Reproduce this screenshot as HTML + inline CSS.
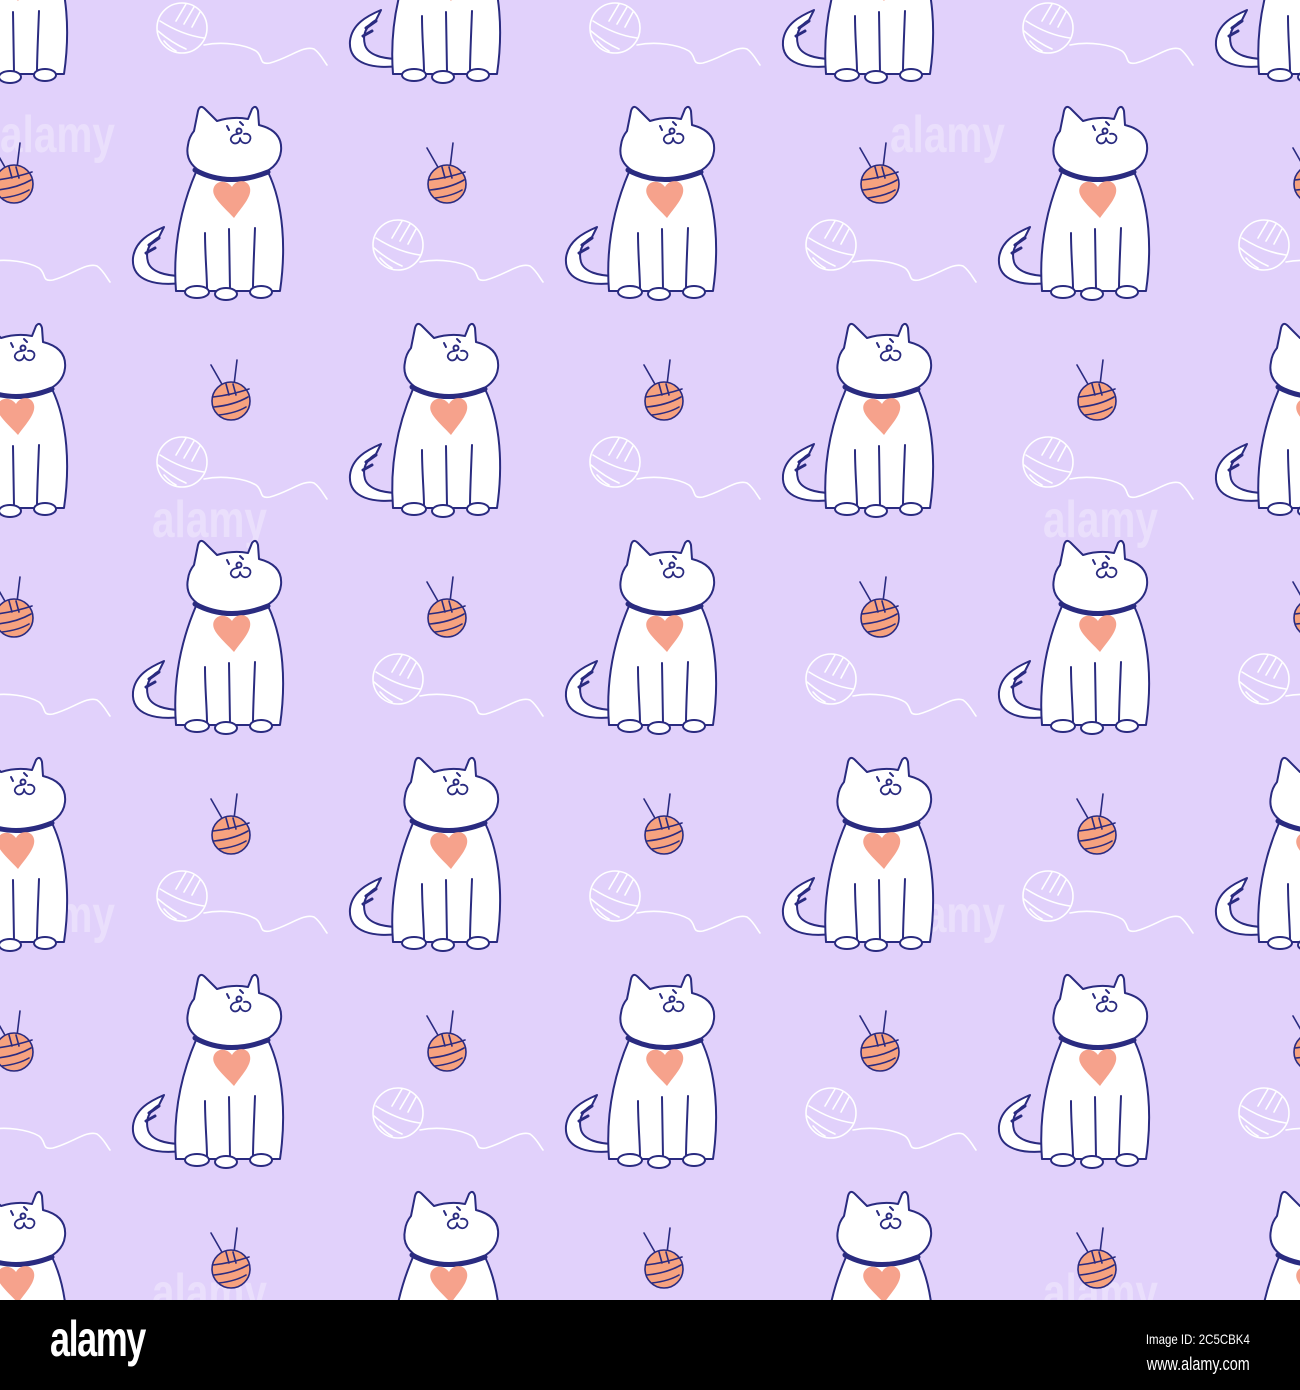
<!DOCTYPE html>
<html><head><meta charset="utf-8"><style>
html,body{margin:0;padding:0;background:#000;}
body{width:1300px;height:1390px;overflow:hidden;position:relative;font-family:"Liberation Sans",sans-serif;}
svg{display:block;position:absolute;left:0;top:0;}
.foot{position:absolute;left:0;top:1300px;width:1300px;height:90px;background:#000;color:#fff;}
.logo{position:absolute;left:50px;top:14px;font-size:50px;font-weight:bold;letter-spacing:-2px;transform:scaleX(0.72);transform-origin:left top;line-height:1;}
.id{position:absolute;right:50px;top:32px;font-size:14px;transform:scaleX(0.82);transform-origin:right top;line-height:1;}
.www{position:absolute;right:50px;top:55px;font-size:18px;transform:scaleX(0.8);transform-origin:right top;line-height:1;}
</style></head><body>
<svg width="1300" height="1300" viewBox="0 0 1300 1300">
<defs>
<g id="t">
 <g stroke="#2a2b80" stroke-width="2" stroke-linejoin="round" stroke-linecap="round">
  <!-- tail -->
  <path d="M182,283 C158,286 131,282 133,258 C135,241 150,233 164,227 L159,237 C149,243 145,251 148,262 C151,272 166,276 182,276 Z" fill="#fff"/>
  <path d="M149,245 L159,238 M146,253 L155,248" stroke-width="3"/>
  <!-- body -->
  <path d="M196,172 C184,200 172,240 176,291 L280,291 C286,250 284,205 268,172 Z" fill="#fff"/>
  <path d="M205,233 C205,255 207,275 207,289 M229,229 L230,289 M255,228 C254,255 253,275 253,289" fill="none"/>
  <ellipse cx="197" cy="292" rx="12" ry="6" fill="#fff"/>
  <ellipse cx="226" cy="294" rx="11" ry="6" fill="#fff"/>
  <ellipse cx="261" cy="292" rx="11" ry="6" fill="#fff"/>
  <!-- head -->
  <path d="M194,131 L198,111 Q200,104 205,109 L217,121 Q233,116 248,119 L252,109 Q256,104 258,111 L259,125 Q283,131 281,151 Q279,170 252,177 Q226,181 205,174 Q184,164 188,145 Q189,137 194,131 Z" fill="#fff"/>
  <path d="M227,126 L229,130 M240,122 L243,125" fill="none"/>
  <circle cx="239" cy="131" r="2.5" fill="#fff"/>
  <path d="M238,134 C232,134 229,139 232,142 C235,145 240,143 240,138 C241,144 248,145 250,140 C252,135 247,133 244,134" fill="none" stroke-width="1.8"/>
  <!-- collar -->
  <path d="M195,170 Q228,188 268,172" fill="none" stroke-width="5"/>
 </g>
 <path d="M234,218 C222,205 210,196 214,187 C218,179 228,181 232,187 C236,179 248,179 250,188 C252,197 241,208 234,218 Z" fill="#f6a28c"/>
 <!-- orange yarn -->
 <g stroke="#2a2b80" stroke-width="1.6" stroke-linecap="round">
  <line x1="427" y1="148" x2="443" y2="176"/>
  <line x1="453" y1="143" x2="449" y2="176"/>
  <circle cx="447" cy="184" r="19" fill="#f6a27f"/>
  <path d="M429,180 Q447,178 465,172 M430,190 Q450,188 464,180 M435,198 Q452,196 462,190 M442,167 L445,178 M449,167 L452,178" fill="none"/>
 </g>
 <!-- white yarn -->
 <g stroke="#fff" stroke-width="1.6" fill="none" stroke-linecap="round">
  <circle cx="398" cy="245" r="25"/>
  <path d="M376,238 Q398,252 420,255 M374,248 Q388,260 402,266 M380,258 Q386,265 392,268 M402,221 L392,238 M410,224 L400,241 M416,229 L408,244"/>
  <path d="M420,262 C440,258 462,262 472,268 C480,274 474,282 486,280 C505,275 520,262 530,266 C536,270 540,278 543,282"/>
 </g>
</g>
</defs>
<rect width="1300" height="1300" fill="#e1d1fb"/>
<g font-family="Liberation Sans, sans-serif" font-weight="bold" font-size="52" fill="#fff" fill-opacity="0.3">
 <text transform="translate(0,152) scale(0.78,1)">alamy</text>
 <text transform="translate(890,152) scale(0.78,1)">alamy</text>
 <text transform="translate(152,537) scale(0.78,1)">alamy</text>
 <text transform="translate(1043,537) scale(0.78,1)">alamy</text>
 <text transform="translate(0,932) scale(0.78,1)">alamy</text>
 <text transform="translate(890,932) scale(0.78,1)">alamy</text>
 <text transform="translate(152,1310) scale(0.78,1)">alamy</text>
 <text transform="translate(1043,1310) scale(0.78,1)">alamy</text>
</g>
<use href="#t" x="-216" y="-217"/><use href="#t" x="217" y="-217"/><use href="#t" x="650" y="-217"/><use href="#t" x="1083" y="-217"/>
<use href="#t" x="-433" y="0"/><use href="#t" x="0" y="0"/><use href="#t" x="433" y="0"/><use href="#t" x="866" y="0"/><use href="#t" x="1299" y="0"/>
<use href="#t" x="-216" y="217"/><use href="#t" x="217" y="217"/><use href="#t" x="650" y="217"/><use href="#t" x="1083" y="217"/>
<use href="#t" x="-433" y="434"/><use href="#t" x="0" y="434"/><use href="#t" x="433" y="434"/><use href="#t" x="866" y="434"/><use href="#t" x="1299" y="434"/>
<use href="#t" x="-216" y="651"/><use href="#t" x="217" y="651"/><use href="#t" x="650" y="651"/><use href="#t" x="1083" y="651"/>
<use href="#t" x="-433" y="868"/><use href="#t" x="0" y="868"/><use href="#t" x="433" y="868"/><use href="#t" x="866" y="868"/><use href="#t" x="1299" y="868"/>
<use href="#t" x="-216" y="1085"/><use href="#t" x="217" y="1085"/><use href="#t" x="650" y="1085"/><use href="#t" x="1083" y="1085"/>
</svg>
<div class="foot">
 <div class="logo">alamy</div>
 <div class="id">Image ID: 2C5CBK4</div>
 <div class="www">www.alamy.com</div>
</div>
</body></html>
